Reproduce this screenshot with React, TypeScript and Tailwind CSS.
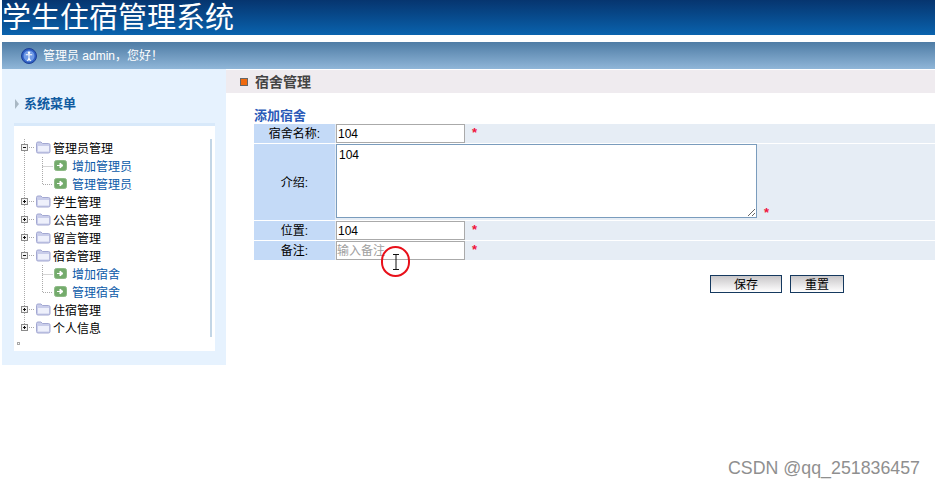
const cjk = "font-['Liberation_Sans','Noto_Sans_CJK_SC',sans-serif]";

const Asterisk = () => <span className="text-[13px] leading-none font-bold text-[#f0143c] font-['Liberation_Sans',sans-serif]">*</span>;

// tree connectors + expander + folder, drawn as one glyph per row
const NodeGlyph = ({ open, last }: { open?: boolean; last?: boolean }) => (
  <svg width="38" height="18" viewBox="0 0 38 18" className="shrink-0">
    <path d={last ? "M10.500 0V5" : "M10.500 0V18"} stroke="#aaa" strokeDasharray="1 1" fill="none" />
    <path d="M15 8.500H21" stroke="#aaa" strokeDasharray="1 1" />
    <rect x="7.500" y="5.500" width="6" height="6" fill="#f4f4f4" stroke="#8a8a8a" />
    <path d="M9 8.500H12" stroke="#111" />
    {!open && <path d="M10.500 7V10" stroke="#111" />}
    <path d="M22.500 4.500a1.500 1.500 0 0 1 1.500-1.500h3l1.500 1.500h6a1.500 1.500 0 0 1 1.500 1.500v6.500a1.500 1.500 0 0 1-1.500 1.500h-10.500a1.500 1.500 0 0 1-1.500-1.500z" fill="#c9cdea" stroke="#a3a8d2" />
    <path d="M24 7h11v5.500h-11z" fill="#eef0fb" />
  </svg>
);

const LeafGlyph = ({ last }: { last?: boolean }) => (
  <svg width="56" height="18" viewBox="0 0 56 18" className="shrink-0">
    <path d="M10.500 0V18" stroke="#aaa" strokeDasharray="1 1" />
    <path d={last ? "M28.500 0V9.500H39" : "M28.500 0V18M28.500 9.500H39"} stroke="#aaa" strokeDasharray="1 1" fill="none" />
    <rect x="40.500" y="3.500" width="12" height="10" rx="2" fill="#74ab6c" stroke="#8dba86" />
    <path d="M43 8.500h4M46 6l3 2.500-3 2.500z" fill="#fff" stroke="#fff" />
  </svg>
);

const tree = [
  { label: "管理员管理", open: true, kids: ["增加管理员", "管理管理员"] },
  { label: "学生管理" },
  { label: "公告管理" },
  { label: "留言管理" },
  { label: "宿舍管理", open: true, kids: ["增加宿舍", "管理宿舍"] },
  { label: "住宿管理" },
  { label: "个人信息", last: true },
];

const Sidebar = () => (
  <aside className="w-[224px] h-[296px] shrink-0 bg-[#e6f2fe] pl-3 pr-[11px]">
    <div className="h-[54px] flex items-center gap-[5px] pl-px pt-[16px]">
      <svg width="4" height="10" viewBox="0 0 4 10"><path d="M0 0l4 5-4 5z" fill="#a9b8c4" /></svg>
      <span className="text-[13px] font-bold text-[#0f5aa0]">系统菜单</span>
    </div>
    <div className="h-[3px] bg-[#d8e9fa]" />
    <div className="h-[225px] bg-white pt-[13px] pr-[3px] relative">
      <div className="border-r-2 border-[#c3d6e6] h-[198px]">
        {tree.map((n) => (
          <div key={n.label}>
            <div className="h-[18px] flex items-center text-[12px] text-black">
              <NodeGlyph open={n.open} last={n.last} />
              <span className="ml-[1px] mt-[2px]">{n.label}</span>
            </div>
            {n.kids?.map((k, i) => (
              <div key={k} className="h-[18px] flex items-center text-[12px] text-[#0a5aa8]">
                <LeafGlyph last={i === 1} />
                <span className="ml-[2px] mt-[2px]">{k}</span>
              </div>
            ))}
          </div>
        ))}
      </div>
      <div className="mt-[5px] ml-[3px] w-[3px] h-[3px] border border-[#a8a8a8]" />
    </div>
  </aside>
);

const Row = ({ label, children, tall }: { label: string; children: React.ReactNode; tall?: boolean }) => (
  <div className={`flex mb-px text-[12px] ${tall ? "h-[76px]" : "h-[19px]"}`}>
    <div className="w-[81px] bg-[#c4daf7] flex items-center justify-center pt-px text-black">{label}</div>
    <div className="flex-1 bg-[#e6edf5] pl-px flex">{children}</div>
  </div>
);

const inputCls = "w-[129px] h-[19px] border border-[#aaa] bg-white text-[12px] text-black placeholder:text-[#a0a0a0] outline-none";

export default function App() {
  return (
    <div className={`relative w-[935px] h-[486px] overflow-hidden bg-white pl-[2px] ${cjk}`}>
      <header className="h-[35px] bg-gradient-to-b from-[#06356f] to-[#0a63ae]">
        <h1 className="text-[29px] leading-[37px] font-normal text-white whitespace-nowrap">学生住宿管理系统</h1>
      </header>
      <div className="mt-[7px] h-[27px] bg-gradient-to-b from-[#4e7ca5] to-[#90b6d8] flex items-center pl-[19px] gap-[6px] text-[12px] text-white">
        <svg width="16" height="16" viewBox="0 0 16 16">
          <circle cx="8" cy="8" r="7.500" fill="#2f5fc4" stroke="#1d3f96" />
          <circle cx="8" cy="8" r="5.500" fill="#6f9ae6" />
          <circle cx="8" cy="4.800" r="1.300" fill="#fff" />
          <path d="M4.800 6.800h6.400M8 6.800v3.500M8 10.300l-1.500 2.700M8 10.300l1.500 2.700" stroke="#fff" strokeWidth="1.100" fill="none" />
        </svg>
        <span>管理员 admin，您好！</span>
      </div>
      <div className="flex">
        <Sidebar />
        <main className="flex-1 pt-px">
          <div className="h-[23px] bg-[#efebef] flex items-center pl-[14px] gap-[7px]">
            <span className="w-2 h-2 bg-[#f06a10] border border-[#666]" />
            <span className="text-[14px] font-bold text-[#444] mt-[2px]">宿舍管理</span>
          </div>
          <div className="pl-[28px] pt-[15px]">
            <div className="h-[16px] leading-[16px] text-[13px] font-bold text-[#2a5ab8]">添加宿舍</div>
            <Row label="宿舍名称:">
              <input readOnly value="104" className={`${inputCls} px-px`} />
              <span className="ml-[7px]"><Asterisk /></span>
            </Row>
            <Row label="介绍:" tall>
              <textarea readOnly value="104" className="w-[421px] h-[74px] border border-[#7a9cbd] bg-white px-[2px] pt-px text-[12px] text-black outline-none" />
              <span className="ml-[7px] mt-[60px]"><Asterisk /></span>
            </Row>
            <Row label="位置:">
              <input readOnly value="104" className={`${inputCls} px-px`} />
              <span className="ml-[7px]"><Asterisk /></span>
            </Row>
            <Row label="备注:">
              <input readOnly placeholder="输入备注" className={inputCls} />
              <span className="ml-[7px]"><Asterisk /></span>
            </Row>
            <div className="flex pl-[456px] gap-2 pt-[14px]">
              <button className="w-[72px] h-[18px] pt-[2px] border border-[#15395f] bg-gradient-to-b from-[#c9c7c9] to-white text-[12px] leading-none text-black">保存</button>
              <button className="w-[54px] h-[18px] pt-[2px] border border-[#15395f] bg-gradient-to-b from-[#c9c7c9] to-white text-[12px] leading-none text-black">重置</button>
            </div>
          </div>
        </main>
      </div>
      {/* recorded mouse pointer highlight */}
      <div className="absolute left-[381px] top-[246px] w-[29px] h-[31px] rounded-full border-2 border-[#e8101a] flex items-center justify-center">
        <svg width="8" height="16" viewBox="0 0 8 16"><path d="M1 .500h6M4 .500v15M1 15.500h6" stroke="#111" fill="none" /></svg>
      </div>
      <div className="absolute right-[15px] top-[459px] text-[17.8px] leading-[18px] text-[#8f8f8f] font-['Liberation_Sans',sans-serif]">CSDN @qq_251836457</div>
    </div>
  );
}
